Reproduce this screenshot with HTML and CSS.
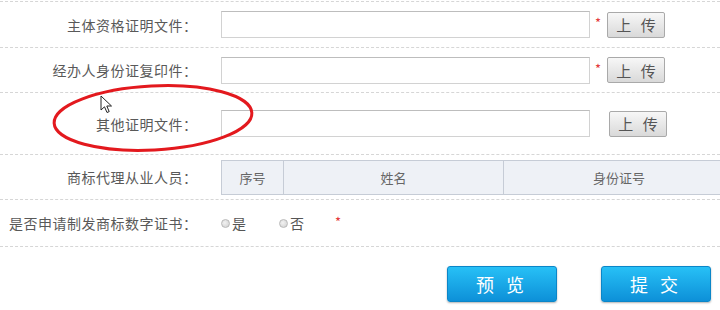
FILE: index.html
```html
<!DOCTYPE html>
<html lang="zh-CN">
<head>
  <meta charset="UTF-8">
  <title>商标代理申请</title>
  <link rel="stylesheet" href="styles.css">
</head>
<body>
  <div id="page">
    <div class="form">
      <div class="row row-a">
        <label class="label">主体资格证明文件<span class="colon">：</span></label>
        <input class="file-input" type="text">
        <span class="star">*</span>
        <button class="upload">上 传</button>
      </div>
      <div class="row row-b">
        <label class="label">经办人身份证复印件<span class="colon">：</span></label>
        <input class="file-input" type="text">
        <span class="star">*</span>
        <button class="upload">上 传</button>
      </div>
      <div class="row row-c">
        <label class="label">其他证明文件<span class="colon">：</span></label>
        <input class="file-input" type="text">
        <span class="star hidden">*</span>
        <button class="upload shifted">上 传</button>
      </div>
      <div class="row row-d">
        <label class="label">商标代理从业人员<span class="colon">：</span></label>
        <div class="table-clip">
          <table class="staff">
            <tr>
              <th class="col-no">序号</th>
              <th class="col-name">姓名</th>
              <th class="col-id">身份证号</th>
            </tr>
          </table>
        </div>
      </div>
      <div class="row row-e">
        <label class="label">是否申请制发商标数字证书<span class="colon">：</span></label>
        <span class="radio"><i class="dot"></i>是</span>
        <span class="radio"><i class="dot"></i>否</span>
        <span class="star radio-star">*</span>
      </div>
    </div>

    <div class="actions">
      <button class="big-btn">预 览</button>
      <button class="big-btn">提 交</button>
    </div>

    <!-- hand-drawn highlight over the third row -->
    <svg class="circle-mark" width="220" height="84" viewBox="0 0 220 84">
      <ellipse cx="110" cy="42" rx="99" ry="32" transform="rotate(-3 110 42)" fill="none" stroke="#e3191e" stroke-width="3"/>
    </svg>

    <svg class="cursor" width="14" height="20" viewBox="0 0 14 20">
      <path d="M1 1 L1 15 L4.5 11.8 L7 17.5 L9.2 16.6 L6.8 11 L11.5 11 Z" fill="#fff" stroke="#222" stroke-width="1" stroke-linejoin="round"/>
    </svg>
  </div>
</body>
</html>
```

FILE: styles.css
```css
html, body {
  margin: 0;
  background: #fff;
}

body {
  font-family: "Noto Sans CJK SC", "Noto Sans", sans-serif;
  color: #555;
}

#page {
  position: relative;
  width: 720px;
  height: 310px;
  padding-top: 1px;
  box-sizing: border-box;
  overflow: hidden;
}

.form {
  border-top: 1px dashed #d6d6d6;
}

.row {
  display: flex;
  align-items: center;
  border-bottom: 1px dashed #d6d6d6;
}

.row-a { height: 45px; }
.row-b { height: 44px; }
.row-c { height: 61px; }
.row-d { height: 44px; }
.row-e { height: 46px; }

.label {
  flex: none;
  width: 197px;
  margin-right: 24px;
  text-align: right;
  font-size: 14px;
  letter-spacing: 0.5px;
  color: #595959;
  white-space: nowrap;
}

/* TC face centres the full-width colon in its cell */
.colon {
  font-family: "Noto Sans CJK TC", sans-serif;
  letter-spacing: 0;
}

.file-input {
  box-sizing: border-box;
  width: 369px;
  height: 27px;
  margin: 0;
  border: 1px solid #d2d2d2;
  border-top-color: #bdbdbd;
  background: #fff;
  outline: none;
}

.star {
  width: 16px;
  text-align: center;
  color: #e4393c;
  font-size: 13px;
  line-height: 1;
  padding-bottom: 4px;
}

.star.hidden {
  visibility: hidden;
}

.upload {
  box-sizing: border-box;
  width: 58px;
  height: 26px;
  margin-left: 1px;
  padding: 0 0 0 3px;
  border: 1px solid #a9a9a9;
  border-radius: 2px;
  background: linear-gradient(#f7f7f7, #d9d9d9);
  font-family: "Noto Sans CJK SC", sans-serif;
  font-size: 15px;
  color: #555;
  letter-spacing: 3px;
}

.upload.shifted {
  margin-left: 3px;
}

.table-clip {
  flex: none;
}

.staff {
  border-collapse: collapse;
  height: 35px;
  font-size: 13px;
  color: #666;
}

.staff th {
  font-weight: normal;
  background: #eef1f6;
  border: 1px solid #c6ccd6;
  padding: 0;
}

.col-no { width: 61px; }
.col-name { width: 219px; }
.col-id { width: 230px; }

.radio {
  display: flex;
  align-items: center;
  font-size: 14px;
  color: #555;
  margin-right: 33px;
}

.dot {
  display: inline-block;
  box-sizing: border-box;
  width: 9px;
  height: 9px;
  margin-right: 2px;
  border: 1px solid #b9b9b9;
  border-radius: 50%;
  background: radial-gradient(circle at 40% 40%, #f2f2f2, #cfcfcf);
}

.radio-star {
  width: auto;
  margin-left: -2px;
}

.actions {
  display: flex;
  padding: 19px 0 0 447px;
  gap: 44px;
}

.big-btn {
  flex: none;
  width: 110px;
  height: 36px;
  border: 1px solid #0b86c8;
  border-radius: 3px;
  background: linear-gradient(#27c0f6, #0d90d8);
  box-shadow: 0 1px 2px rgba(0, 0, 0, 0.3);
  color: #fff;
  font-family: "Noto Sans CJK SC", sans-serif;
  font-size: 18px;
  letter-spacing: 4px;
}

.circle-mark {
  position: absolute;
  left: 43px;
  top: 76px;
}

.cursor {
  position: absolute;
  left: 100px;
  top: 95px;
}
```
